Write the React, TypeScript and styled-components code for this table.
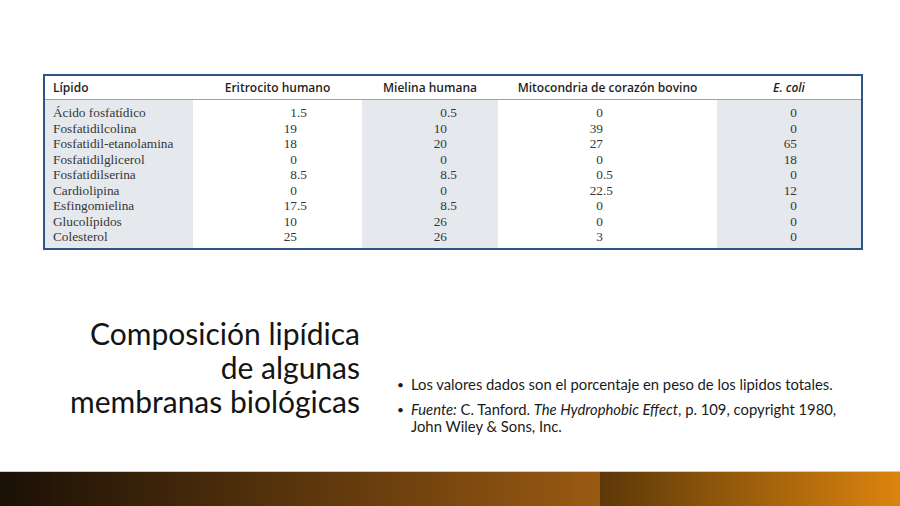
import React from "react";
import styled, { createGlobalStyle } from "styled-components";

const Global = createGlobalStyle`
  html, body { margin: 0; padding: 0; background: #ffffff; }
  body { width: 900px; height: 506px; overflow: hidden; }
`;

const Page = styled.div`
  width: 900px;
  height: 506px;
  display: flex;
  flex-direction: column;
  background: #ffffff;
`;

const TableArea = styled.div`
  padding: 74px 0 0 43px;
`;

const Table = styled.div`
  width: 816px;
  border: 2px solid #2e5585;
  display: grid;
  grid-template-columns: 148px 169px 136px 219px 144px;
  grid-template-rows: 24px auto;
  background: #ffffff;
`;

const HeadCell = styled.div<{ $align: "left" | "center"; $italic?: boolean }>`
  display: flex;
  align-items: center;
  justify-content: ${(p) => (p.$align === "left" ? "flex-start" : "center")};
  padding-left: ${(p) => (p.$align === "left" ? "8px" : "0")};
  font-family: "Open Sans", "Liberation Sans", sans-serif;
  font-weight: 600;
  font-size: 12px;
  font-style: ${(p) => (p.$italic ? "italic" : "normal")};
  color: #1f1f1f;
  border-bottom: 1px solid #9aa3ad;
  white-space: nowrap;
`;

const BodyCol = styled.div<{ $shaded: boolean }>`
  background: ${(p) => (p.$shaded ? "#e5e9ee" : "#ffffff")};
  padding: 5px 0 3px;
  display: flex;
  flex-direction: column;
`;

const NameCell = styled.div`
  height: 15.5px;
  line-height: 15.5px;
  padding-left: 8px;
  font-family: "Liberation Serif", "Times New Roman", serif;
  font-size: 13.3px;
  color: #363636;
  white-space: nowrap;
`;

const ValueCell = styled.div`
  height: 15.5px;
  line-height: 15.5px;
  display: flex;
  font-family: "Liberation Serif", "Times New Roman", serif;
  font-size: 13.3px;
  color: #363636;
  white-space: nowrap;
`;

const IntPart = styled.span<{ $w: number }>`
  width: ${(p) => p.$w}px;
  text-align: right;
  display: inline-block;
`;

const FracPart = styled.span`
  display: inline-block;
`;

const Main = styled.div`
  display: flex;
  margin-top: 66px;
`;

const Title = styled.h1`
  margin: 0;
  width: 360px;
  text-align: right;
  font-family: "Lato", "Open Sans", sans-serif;
  font-weight: 400;
  font-size: 30px;
  line-height: 34px;
  color: #141414;
`;

const Bullets = styled.ul`
  margin: 60px 0 0 0;
  padding: 0 0 0 38px;
  list-style: none;
  display: flex;
  flex-direction: column;
  gap: 8px;
`;

const Bullet = styled.li`
  position: relative;
  padding-left: 13px;
  width: 445px;
  font-family: "Lato", "Open Sans", sans-serif;
  font-size: 14.8px;
  line-height: 17px;
  color: #1a1a1a;
  &::before {
    content: "•";
    position: absolute;
    left: -1px;
    top: 0;
    font-size: 12px;
  }
`;

const Em = styled.i`
  font-style: italic;
`;

const Footer = styled.div`
  margin-top: auto;
  height: 34px;
  display: flex;
  border-top: 1px solid #e2c6b0;
`;

const FooterSeg = styled.div<{ $from: string; $to: string; $w: number }>`
  width: ${(p) => p.$w}px;
  height: 100%;
  background: linear-gradient(90deg, ${(p) => p.$from}, ${(p) => p.$to});
`;

type Col = { head: React.ReactNode; italic?: boolean; shaded: boolean; intW: number; values: string[] };

const names = [
  "Ácido fosfatídico",
  "Fosfatidilcolina",
  "Fosfatidil-etanolamina",
  "Fosfatidilglicerol",
  "Fosfatidilserina",
  "Cardiolipina",
  "Esfingomielina",
  "Glucolípidos",
  "Colesterol",
];

const cols: Col[] = [
  { head: "Eritrocito humano", shaded: false, intW: 104, values: ["1.5", "19", "18", "0", "8.5", "0", "17.5", "10", "25"] },
  { head: "Mielina humana", shaded: true, intW: 85, values: ["0.5", "10", "20", "0", "8.5", "0", "8.5", "26", "26"] },
  { head: "Mitocondria de corazón bovino", shaded: false, intW: 105, values: ["0", "39", "27", "0", "0.5", "22.5", "0", "0", "3"] },
  { head: "E. coli", italic: true, shaded: true, intW: 80, values: ["0", "0", "65", "18", "0", "12", "0", "0", "0"] },
];

function Value({ v, w }: { v: string; w: number }) {
  const [i, f] = v.split(".");
  return (
    <ValueCell>
      <IntPart $w={w}>{i}</IntPart>
      {f !== undefined && <FracPart>.{f}</FracPart>}
    </ValueCell>
  );
}

export default function App() {
  return (
    <>
      <Global />
      <Page>
        <TableArea>
          <Table>
            <HeadCell $align="left">Lípido</HeadCell>
            {cols.map((c, i) => (
              <HeadCell key={i} $align="center" $italic={c.italic}>
                {c.head}
              </HeadCell>
            ))}
            <BodyCol $shaded={true}>
              {names.map((n) => (
                <NameCell key={n}>{n}</NameCell>
              ))}
            </BodyCol>
            {cols.map((c, i) => (
              <BodyCol key={i} $shaded={c.shaded}>
                {c.values.map((v, j) => (
                  <Value key={j} v={v} w={c.intW} />
                ))}
              </BodyCol>
            ))}
          </Table>
        </TableArea>
        <Main>
          <Title>
            Composición lipídica
            <br />
            de algunas
            <br />
            membranas biológicas
          </Title>
          <Bullets>
            <Bullet>Los valores dados son el porcentaje en peso de los lipidos totales.</Bullet>
            <Bullet>
              <Em>Fuente:</Em> C. Tanford. <Em>The Hydrophobic Effect</Em>, p. 109, copyright 1980, John Wiley &amp; Sons, Inc.
            </Bullet>
          </Bullets>
        </Main>
        <Footer>
          <FooterSeg $w={600} $from="#1a1006" $to="#9a5a12" />
          <FooterSeg $w={300} $from="#5c3808" $to="#dc840f" />
        </Footer>
      </Page>
    </>
  );
}
